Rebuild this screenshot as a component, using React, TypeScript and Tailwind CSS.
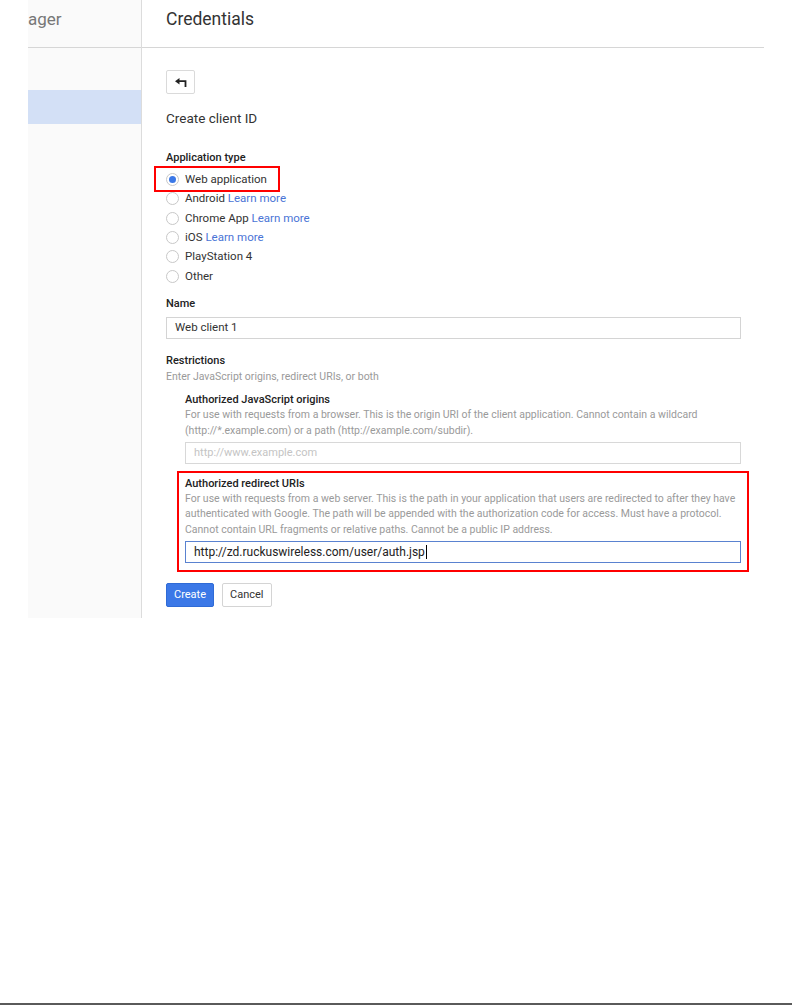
import React from "react";

const font = { fontFamily: "Roboto, 'Liberation Sans', Arial, sans-serif" };

function Radio({ checked }: { checked?: boolean }) {
  return (
    <span className="flex h-[13px] w-[13px] shrink-0 items-center justify-center rounded-full border border-[#c8c8c8] bg-white">
      {checked && <span className="h-[7px] w-[7px] rounded-full bg-[#3b78e7]" />}
    </span>
  );
}

function Option({ label, link, checked }: { label: string; link?: boolean; checked?: boolean }) {
  return (
    <div className="flex h-[19.3px] items-center gap-[6px]">
      <Radio checked={checked} />
      <span className="text-[11.5px] text-[#333]">
        {label}
        {link && <span className="text-[#4a74d6]"> Learn more</span>}
      </span>
    </div>
  );
}

function BackArrow() {
  return (
    <svg width="12" height="9" viewBox="0 0 12 9">
      <path d="M0 3.2 L4.5 0 L4.5 6.4 Z" fill="#222" />
      <path d="M3.5 3.2 H10.5 V9" stroke="#222" strokeWidth="1.8" fill="none" />
    </svg>
  );
}

export default function App() {
  return (
    <div className="relative flex h-[1005px] w-[792px] flex-col bg-white" style={font}>
      <div className="flex pl-[28px]">
        <aside className="h-[618px] w-[114px] overflow-hidden border-r border-[#dcdcdc] bg-[#fafafa]">
          <div className="flex h-[48px] items-center border-b border-[#d6d6d6] pb-[8px]">
            <span className="whitespace-nowrap text-[17px] text-[#777]">ager</span>
          </div>
          <div className="mt-[42px] h-[34px] bg-[#d3e0f6]" />
        </aside>

        <main className="w-[622px]">
          <div className="flex h-[48px] items-center border-b border-[#d6d6d6] pb-[9px] pl-[24px]">
            <h1 className="text-[17.5px] text-[#333]">Credentials</h1>
          </div>

          <div className="pl-[24px] pr-[23px]">
            <button
              type="button"
              className="mt-[22px] flex h-[24px] w-[29px] items-center justify-center rounded-[2px] border border-[#dadada] bg-white"
            >
              <BackArrow />
            </button>

            <div className="mt-[16px] text-[13.5px] leading-[16px] text-[#333]">Create client ID</div>

            <div className="mt-[25px] text-[11px] font-medium leading-[14px] text-[#222]">Application type</div>
            <div className="mt-[5px] flex flex-col">
              <div className="relative">
                <Option label="Web application" checked />
                <span className="pointer-events-none absolute left-[-12px] top-[-4px] h-[26px] w-[126px] border-2 border-[#f00]" />
              </div>
              <Option label="Android" link />
              <Option label="Chrome App" link />
              <Option label="iOS" link />
              <Option label="PlayStation 4" />
              <Option label="Other" />
            </div>

            <div className="mt-[11px] text-[11px] font-medium leading-[14px] text-[#222]">Name</div>
            <div className="mt-[6px] flex h-[22px] items-center border border-[#d4d4d4] px-[8px] text-[11.5px] text-[#333]">
              Web client 1
            </div>

            <div className="mt-[15px] text-[11px] font-medium leading-[14px] text-[#222]">Restrictions</div>
            <div className="mt-[2px] text-[10.5px] leading-[14px] text-[#9a9a9a]">
              Enter JavaScript origins, redirect URIs, or both
            </div>

            <div className="ml-[19px] mt-[9px]">
              <div className="text-[11px] font-medium leading-[14px] text-[#222]">Authorized JavaScript origins</div>
              <div className="text-[10.5px] leading-[16px] text-[#9a9a9a]">
                For use with requests from a browser. This is the origin URI of the client application. Cannot contain a wildcard (http://*.example.com) or a path (http://example.com/subdir).
              </div>
              <div className="mt-[3px] flex h-[22px] items-center border border-[#d8d8d8] px-[8px] text-[11px] text-[#c4c4c4]">
                http://www.example.com
              </div>

              <div className="-mx-[8px] mt-[7px] border-2 border-[#f00] px-[6px] pb-[7px] pt-[4px]">
                <div className="text-[11px] font-medium leading-[14px] text-[#222]">Authorized redirect URIs</div>
                <div className="text-[10.5px] leading-[15.5px] text-[#9a9a9a]">
                  For use with requests from a web server. This is the path in your application that users are redirected to after they have authenticated with Google. The path will be appended with the authorization code for access. Must have a protocol. Cannot contain URL fragments or relative paths. Cannot be a public IP address.
                </div>
                <div className="mt-[4px] flex h-[22px] items-center border border-[#5a82d0] px-[8px] text-[12px] text-[#222]">
                  http://zd.ruckuswireless.com/user/auth.jsp
                  <span className="ml-[1px] h-[14px] w-px bg-[#000]" />
                </div>
              </div>
            </div>

            <div className="mt-[11px] flex gap-[8px]">
              <button
                type="button"
                className="h-[24px] rounded-[2px] border border-[#2f6bd6] bg-[#3b78e7] px-[7px] text-[11px] text-white"
              >
                Create
              </button>
              <button
                type="button"
                className="h-[24px] rounded-[2px] border border-[#d4d4d4] bg-white px-[7px] text-[11px] text-[#333]"
              >
                Cancel
              </button>
            </div>
          </div>
        </main>
      </div>

      <div className="mt-auto h-[2px] bg-[#5a5a5a]" />
    </div>
  );
}
